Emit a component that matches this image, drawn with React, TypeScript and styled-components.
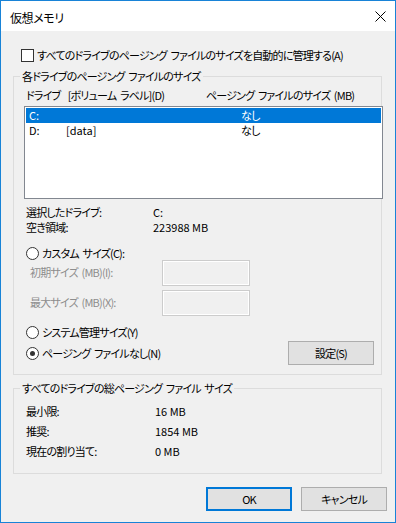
import React from 'react';
import styled, { createGlobalStyle, css } from 'styled-components';

const GlobalStyle = createGlobalStyle`
  html, body {
    margin: 0;
    padding: 0;
    background: #ffffff;
  }
`;

const Window = styled.div`
  width: 396px;
  height: 523px;
  box-sizing: border-box;
  border: 1px solid #1883d7;
  background: #f0f0f0;
  display: flex;
  flex-direction: column;
  font-family: 'Noto Sans CJK JP', 'Noto Sans', sans-serif;
  font-size: 11px;
  font-feature-settings: 'palt';
  letter-spacing: -0.8px;
  word-spacing: 2px;
  color: #000;
`;

const TitleBar = styled.div`
  height: 30px;
  background: #ffffff;
  display: flex;
  align-items: center;
  justify-content: space-between;
  padding: 0 9px;
  flex-shrink: 0;
`;

const Title = styled.span`
  font-size: 12px;
  letter-spacing: -0.4px;
  padding-top: 2px;
`;

const Body = styled.div`
  padding: 17px 12px 0 12px;
  display: flex;
  flex-direction: column;
`;

const CheckRow = styled.label`
  display: flex;
  align-items: center;
  gap: 3px;
  margin-left: 8px;
  height: 14px;
  line-height: 14px;
`;

const CheckBox = styled.span`
  width: 13px;
  height: 13px;
  box-sizing: border-box;
  border: 1px solid #333;
  background: #fff;
  flex-shrink: 0;
`;

const GroupBox = styled.fieldset<{ $top: number }>`
  margin: ${({ $top }) => $top}px 0 0 0;
  padding: 0;
  width: 369px;
  box-sizing: border-box;
  border: 1px solid #dcdcdc;
  min-width: 0;
`;

const Legend = styled.legend`
  margin-left: 6px;
  padding: 0 2px;
  line-height: 14px;
  height: 14px;
`;

const GroupBody = styled.div<{ $pt: number; $pb: number }>`
  padding: ${({ $pt }) => $pt}px 0 ${({ $pb }) => $pb}px 10px;
  display: flex;
  flex-direction: column;
`;

const HeaderRow = styled.div`
  display: grid;
  grid-template-columns: 180px 1fr;
  margin-left: 2px;
  line-height: 14px;
  height: 14px;
`;

const ListBox = styled.div`
  margin-top: 4px;
  width: 359px;
  height: 93px;
  box-sizing: border-box;
  border: 1px solid #828790;
  padding: 1px;
  background: #fff;
`;

const ListRow = styled.div<{ $selected?: boolean }>`
  display: grid;
  grid-template-columns: 37px 175px 1fr;
  padding-left: 3px;
  height: 15px;
  line-height: 15px;
  ${({ $selected }) =>
    $selected &&
    css`
      background: #0078d7;
      color: #fff;
    `}
`;

const Value = styled.span`
  letter-spacing: 0;
  word-spacing: 0;
`;

const InfoBlock = styled.div`
  margin-top: 6px;
  margin-left: 2px;
  display: grid;
  grid-template-columns: 127px 1fr;
  grid-auto-rows: 15px;
  line-height: 15px;
`;

const RadioRow = styled.label<{ $mt?: number }>`
  display: flex;
  align-items: center;
  gap: 3px;
  margin-left: 2px;
  margin-top: ${({ $mt }) => $mt ?? 0}px;
  height: 14px;
  line-height: 14px;
`;

const Radio = styled.span<{ $checked?: boolean }>`
  width: 13px;
  height: 13px;
  box-sizing: border-box;
  border: 1px solid #333;
  border-radius: 50%;
  background: #fff;
  flex-shrink: 0;
  display: flex;
  align-items: center;
  justify-content: center;
  &::after {
    content: '';
    width: 5px;
    height: 5px;
    border-radius: 50%;
    background: ${({ $checked }) => ($checked ? '#333' : 'transparent')};
  }
`;

const SizeRow = styled.div<{ $mt?: number }>`
  display: grid;
  grid-template-columns: 138px 88px;
  align-items: center;
  margin-top: ${({ $mt }) => $mt ?? 0}px;
  height: 26px;
`;

const DisabledLabel = styled.span`
  padding-left: 6px;
  color: #8d8d8d;
  margin-top: -2px;
`;

const DisabledInput = styled.div`
  width: 88px;
  height: 26px;
  box-sizing: border-box;
  border: 1px solid #cccccc;
  box-shadow: inset 0 0 0 1px #ffffff;
  background: #f0f0f0;
`;

const BottomRow = styled.div`
  display: flex;
  align-items: center;
  justify-content: space-between;
  margin-top: 2px;
  height: 24px;
  padding-right: 7px;
`;

const Button = styled.button<{ $default?: boolean }>`
  width: 86px;
  height: 24px;
  box-sizing: border-box;
  background: #e1e1e1;
  border: 1px solid #adadad;
  font: inherit;
  letter-spacing: inherit;
  color: #000;
  padding: 0;
  ${({ $default }) =>
    $default &&
    css`
      border: 2px solid #0078d7;
    `}
`;

const TotalBlock = styled.div`
  margin-left: 2px;
  display: grid;
  grid-template-columns: 129px 1fr;
  grid-auto-rows: 20px;
  align-items: center;
`;

const Footer = styled.div`
  display: flex;
  justify-content: flex-end;
  gap: 9px;
  padding: 13px 8px 0 0;
`;

const CloseIcon = () => (
  <svg width="11" height="11" viewBox="0 0 11 11" style={{ display: 'block' }}>
    <path d="M0.5 0.5 L10.5 10.5 M10.5 0.5 L0.5 10.5" stroke="#000" strokeWidth="1" fill="none" />
  </svg>
);

export default function App() {
  return (
    <>
      <GlobalStyle />
      <Window>
        <TitleBar>
          <Title>仮想メモリ</Title>
          <CloseIcon />
        </TitleBar>
        <Body>
          <CheckRow>
            <CheckBox />
            <span>すべてのドライブのページング ファイルのサイズを自動的に管理する(A)</span>
          </CheckRow>

          <GroupBox $top={7}>
            <Legend>各ドライブのページング ファイルのサイズ</Legend>
            <GroupBody $pt={5} $pb={9}>
              <HeaderRow>
                <span>ドライブ&nbsp; [ボリューム ラベル](D)</span>
                <span>ページング ファイルのサイズ (MB)</span>
              </HeaderRow>
              <ListBox>
                <ListRow $selected>
                  <Value>C:</Value>
                  <span></span>
                  <span>なし</span>
                </ListRow>
                <ListRow>
                  <Value>D:</Value>
                  <Value>[data]</Value>
                  <span>なし</span>
                </ListRow>
              </ListBox>

              <InfoBlock>
                <span>選択したドライブ:</span>
                <Value>C:</Value>
                <span>空き領域:</span>
                <Value>223988 MB</Value>
              </InfoBlock>

              <RadioRow $mt={11}>
                <Radio />
                <span>カスタム サイズ(C):</span>
              </RadioRow>
              <SizeRow>
                <DisabledLabel>初期サイズ (MB)(I):</DisabledLabel>
                <DisabledInput />
              </SizeRow>
              <SizeRow $mt={4}>
                <DisabledLabel>最大サイズ (MB)(X):</DisabledLabel>
                <DisabledInput />
              </SizeRow>

              <RadioRow $mt={9}>
                <Radio />
                <span>システム管理サイズ(Y)</span>
              </RadioRow>
              <BottomRow>
                <RadioRow>
                  <Radio $checked />
                  <span>ページング ファイルなし(N)</span>
                </RadioRow>
                <Button>設定(S)</Button>
              </BottomRow>
            </GroupBody>
          </GroupBox>

          <GroupBox $top={6}>
            <Legend>すべてのドライブの総ページング ファイル サイズ</Legend>
            <GroupBody $pt={6} $pb={12}>
              <TotalBlock>
                <span>最小限:</span>
                <Value>16 MB</Value>
                <span>推奨:</span>
                <Value>1854 MB</Value>
                <span>現在の割り当て:</span>
                <Value>0 MB</Value>
              </TotalBlock>
            </GroupBody>
          </GroupBox>
        </Body>
        <Footer>
          <Button $default>OK</Button>
          <Button>キャンセル</Button>
        </Footer>
      </Window>
    </>
  );
}
